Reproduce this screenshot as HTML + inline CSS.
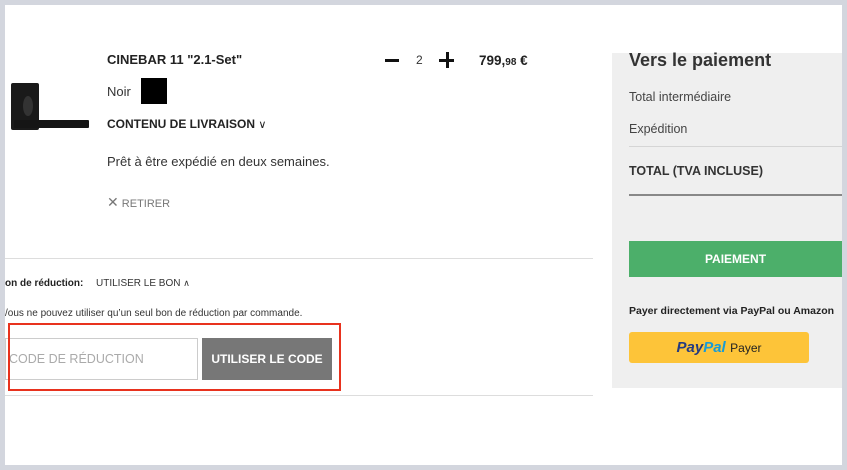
<!DOCTYPE html>
<html><head><meta charset="utf-8"><style>
body{margin:0;width:847px;height:470px;background:#d3d6de;font-family:"Liberation Sans",sans-serif;position:relative;overflow:hidden;color:#222}
.main{position:absolute;left:5px;top:5px;width:837px;height:460px;background:#fff}
.a{position:absolute;white-space:nowrap}
</style></head><body>
<div class="main"></div>
<div class="a" style="left:11px;top:83px;width:28px;height:47px;background:#1a1a1a;border-radius:2px"></div>
<div class="a" style="left:23px;top:96px;width:10px;height:20px;background:#333;border-radius:50%"></div>
<div class="a" style="left:14px;top:120px;width:75px;height:8px;background:#151515;border-radius:1px"></div>
<div class="a" style="left:107px;top:52px;font-size:13px;font-weight:bold">CINEBAR 11 "2.1-Set"</div>
<div class="a" style="left:107px;top:84px;font-size:13px;color:#333">Noir</div>
<div class="a" style="left:141px;top:78px;width:26px;height:26px;background:#000"></div>
<div class="a" style="left:107px;top:117px;font-size:12px;font-weight:bold;color:#222">CONTENU DE LIVRAISON <span style="font-weight:normal;font-size:11px">∨</span></div>
<div class="a" style="left:107px;top:154px;font-size:13px;color:#333">Prêt à être expédié en deux semaines.</div>
<div class="a" style="left:107px;top:194px;font-size:11px;color:#777"><span style="font-size:14px">✕</span> RETIRER</div>
<div class="a" style="left:385px;top:59px;width:14px;height:3px;background:#111"></div>
<div class="a" style="left:416px;top:53px;font-size:12px;color:#333">2</div>
<div class="a" style="left:439px;top:59px;width:15px;height:3px;background:#111"></div>
<div class="a" style="left:445.5px;top:52px;width:3px;height:16px;background:#111"></div>
<div class="a" style="left:479px;top:53px;font-size:13.5px;font-weight:bold">799,<span style="font-size:10px">98</span> €</div>
<div class="a" style="left:5px;top:258px;width:588px;height:1px;background:#ddd"></div>
<div class="a" style="left:5px;top:278px;font-size:10px;font-weight:bold">on de réduction:</div>
<div class="a" style="left:96px;top:278px;font-size:10px;color:#333">UTILISER LE BON <span style="font-size:9px">∧</span></div>
<div class="a" style="left:5px;top:308px;font-size:10px;color:#333">/ous ne pouvez utiliser qu’un seul bon de réduction par commande.</div>
<div class="a" style="left:5px;top:338px;width:193px;height:42px;border:1px solid #ccc;box-sizing:border-box"></div>
<div class="a" style="left:9px;top:352px;font-size:12.5px;color:#aaa">CODE DE RÉDUCTION</div>
<div class="a" style="left:202px;top:338px;width:130px;height:42px;background:#777;color:#fff;font-size:12px;font-weight:bold;text-align:center;line-height:42px">UTILISER LE CODE</div>
<div class="a" style="left:8px;top:323px;width:333px;height:68px;border:2px solid #e8321e;box-sizing:border-box"></div>
<div class="a" style="left:5px;top:395px;width:588px;height:1px;background:#ddd"></div>
<div class="a" style="left:612px;top:53px;width:230px;height:335px;background:#efefef"></div>
<div class="a" style="left:629px;top:50px;font-size:18px;font-weight:bold;color:#333">Vers le paiement</div>
<div class="a" style="left:629px;top:90px;font-size:12.5px;color:#444">Total intermédiaire</div>
<div class="a" style="left:629px;top:122px;font-size:12.5px;color:#444">Expédition</div>
<div class="a" style="left:629px;top:146px;width:213px;height:1px;background:#d5d5d5"></div>
<div class="a" style="left:629px;top:164px;font-size:12.5px;font-weight:bold;color:#333">TOTAL (TVA INCLUSE)</div>
<div class="a" style="left:629px;top:194px;width:213px;height:2px;background:#888"></div>
<div class="a" style="left:629px;top:241px;width:213px;height:36px;background:#4caf6a;color:#fff;font-size:12px;font-weight:bold;text-align:center;line-height:36px">PAIEMENT</div>
<div class="a" style="left:629px;top:305px;font-size:10.5px;font-weight:bold;color:#222">Payer directement via PayPal ou Amazon</div>
<div class="a" style="left:629px;top:332px;width:180px;height:31px;background:#fdc439;border-radius:3px;text-align:center;line-height:31px"><b style="font-style:italic;color:#253b80;font-size:15px">Pay</b><b style="font-style:italic;color:#179bd7;font-size:15px">Pal</b> <span style="font-size:12px;color:#222">Payer</span></div>
</body></html>
